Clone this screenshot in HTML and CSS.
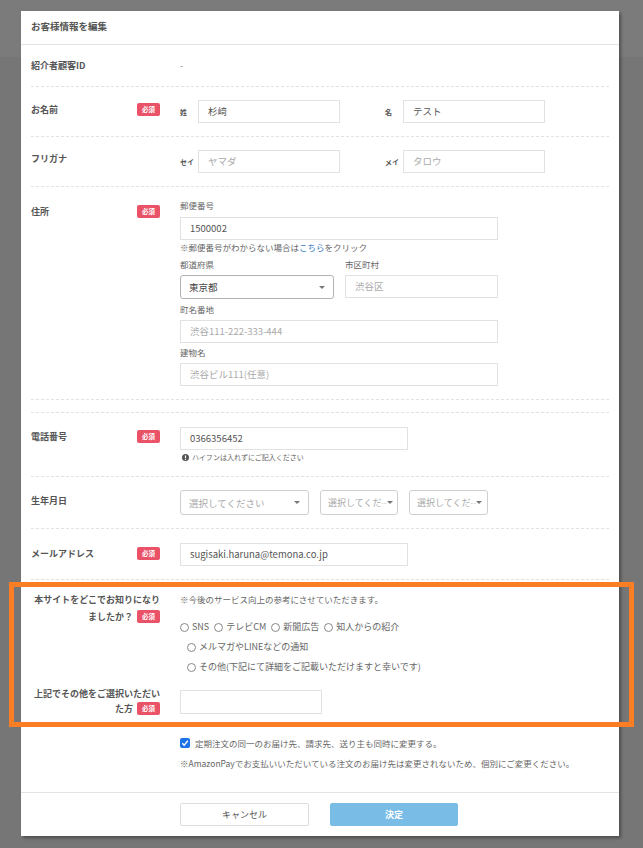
FILE: index.html
```html
<!DOCTYPE html>
<html lang="ja">
<head>
<meta charset="utf-8">
<title>お客様情報を編集</title>
<link rel="stylesheet" href="styles.css">
</head>
<body>
<div class="page">
  <div class="topband"></div>
  <div class="page-body"><span class="leave">退会する</span></div>
</div>

<div class="modal">
  <div class="modal-header">お客様情報を編集</div>

  <div class="row row-id">
    <div class="label"><span>紹介者顧客ID</span></div>
    <div class="content plain">-</div>
  </div>

  <div class="row row-name">
    <div class="label"><span>お名前</span><span class="badge">必須</span></div>
    <div class="content pair">
      <div class="pair-item"><span class="sub">姓</span><div class="input w142">杉﨑</div></div>
      <div class="pair-item"><span class="sub">名</span><div class="input w142">テスト</div></div>
    </div>
  </div>

  <div class="row row-kana">
    <div class="label"><span>フリガナ</span></div>
    <div class="content pair">
      <div class="pair-item"><span class="sub">セイ</span><div class="input w142 ph">ヤマダ</div></div>
      <div class="pair-item"><span class="sub">メイ</span><div class="input w142 ph">タロウ</div></div>
    </div>
  </div>

  <div class="row row-addr">
    <div class="label addr-label"><span>住所</span><span class="badge">必須</span></div>
    <div class="content stack">
      <div class="cap">郵便番号</div>
      <div class="input w318 mt6">1500002</div>
      <div class="note mt1">※郵便番号がわからない場合は<span class="link">こちら</span>をクリック</div>
      <div class="two-col mt5">
        <div class="cap">都道府県</div>
        <div class="cap">市区町村</div>
      </div>
      <div class="two-col mt5">
        <div class="select pref"><span>東京都</span><span class="caret"></span></div>
        <div class="input w153 ph">渋谷区</div>
      </div>
      <div class="cap mt4">町名番地</div>
      <div class="input w318 ph mt5">渋谷111-222-333-444</div>
      <div class="cap mt3">建物名</div>
      <div class="input w318 ph mt5">渋谷ビル111(任意)</div>
    </div>
  </div>

  <div class="row row-empty"></div>

  <div class="row row-tel">
    <div class="label"><span>電話番号</span><span class="badge">必須</span></div>
    <div class="content stack">
      <div class="input w228">0366356452</div>
      <div class="hint"><svg class="info" viewBox="0 0 10 10" width="7" height="7"><circle cx="5" cy="5" r="5" fill="#555"/><rect x="4.2" y="2" width="1.6" height="4" fill="#fff"/><rect x="4.2" y="7" width="1.6" height="1.5" fill="#fff"/></svg>ハイフンは入れずにご記入ください</div>
    </div>
  </div>

  <div class="row row-birth">
    <div class="label birth-label"><span>生年月日</span></div>
    <div class="content selects">
      <div class="select date w129"><span class="ph-t">選択してください</span><span class="caret"></span></div>
      <div class="select date w78 tight"><span class="ph-t small">選択してくだ<span class="dots">…</span></span><span class="caret"></span></div>
      <div class="select date w79 tight"><span class="ph-t small">選択してくだ<span class="dots">…</span></span><span class="caret"></span></div>
    </div>
  </div>

  <div class="row row-mail">
    <div class="label mail-label"><span>メールアドレス</span><span class="badge">必須</span></div>
    <div class="content">
      <div class="input w228">sugisaki.haruna@temona.co.jp</div>
    </div>
  </div>

  <div class="row row-survey">
    <div class="survey-block">
      <div class="label right"><span>本サイトをどこでお知りになり<br>ましたか？<span class="badge inline">必須</span></span></div>
      <div class="content stack">
        <div class="note">※今後のサービス向上の参考にさせていただきます。</div>
        <div class="radios first">
          <span class="radio"><i></i>SNS</span>
          <span class="radio"><i></i>テレビCM</span>
          <span class="radio"><i></i>新聞広告</span>
          <span class="radio"><i></i>知人からの紹介</span>
        </div>
        <div class="radios indent">
          <span class="radio"><i></i>メルマガやLINEなどの通知</span>
        </div>
        <div class="radios indent">
          <span class="radio"><i></i>その他(下記にて詳細をご記載いただけますと幸いです)</span>
        </div>
      </div>
    </div>
    <div class="survey-block second">
      <div class="label right other-label"><span>上記でその他をご選択いただい<br>た方<span class="badge inline">必須</span></span></div>
      <div class="content">
        <div class="input w142 tall"></div>
      </div>
    </div>
  </div>

  <div class="sync">
    <div class="check-line"><span class="checkbox"><svg viewBox="0 0 10 10" width="10" height="10"><path d="M2.3 5.2 L4.2 7.2 L7.8 2.8" fill="none" stroke="#fff" stroke-width="1.4"/></svg></span>定期注文の同一のお届け先、請求先、送り主も同時に変更する。</div>
    <div class="note sync-note">※AmazonPayでお支払いいただいている注文のお届け先は変更されないため、個別にご変更ください。</div>
  </div>

  <div class="modal-footer">
    <button class="btn cancel">キャンセル</button>
    <button class="btn ok">決定</button>
  </div>
</div>

<div class="highlight"></div>
</body>
</html>
```

FILE: styles.css
```css
* { box-sizing: border-box; }
html, body {
  margin: 0;
  padding: 0;
  height: 848px;
  overflow: hidden;
}
body {
  font-family: "Noto Sans CJK JP", "Noto Sans", sans-serif;
  background: #777;
  color: #555;
  position: relative;
}

.page { height: 848px; }
.topband { height: 57px; background: #7b7b7b; }
.page-body { background: #767676; height: 791px; padding: 784px 0 0 85px; }
.leave { font-size: 9px; color: #28315a; line-height: 12px; }

.modal {
  position: absolute;
  left: 21px;
  top: 11px;
  width: 598px;
  background: #fff;
  box-shadow: 2px 2px 3px rgba(0,0,0,0.35);
}

.modal-header {
  height: 34px;
  padding-left: 10px;
  line-height: 31px;
  font-size: 9.5px;
  font-weight: bold;
  color: #555;
  border-bottom: 1px solid #e3e3e3;
}

.row {
  display: grid;
  grid-template-columns: 129px 1fr;
  column-gap: 20px;
  margin: 0 10px;
  border-bottom: 1px dashed #e2e2e2;
  align-items: start;
}

.label {
  display: flex;
  justify-content: space-between;
  align-items: center;
  font-size: 9px;
  font-weight: bold;
  color: #555;
  line-height: 13px;
  margin-top: 3px;
}
.label.right { justify-content: flex-end; text-align: right; line-height: 17px; margin-top: 0; }

.badge {
  display: inline-block;
  width: 23px;
  height: 13px;
  line-height: 13px;
  background: #ea5268;
  color: #fff;
  font-size: 6.5px;
  text-align: center;
  border-radius: 2px;
  font-weight: bold;
}
.badge.inline { margin-left: 4px; vertical-align: middle; position: relative; top: -1px; }

.content { font-size: 8.5px; color: #666; }
.plain { line-height: 12px; font-size: 9px; color: #888; }

.row-id { padding: 15px 0 14px; }
.row-id .label { margin-top: 0; line-height: 12px; }

.row-name { padding: 13px 0 13px; }
.row-kana { padding: 13px 0 13px; }
.row-kana .label { margin-top: 2px; }

.pair { display: flex; gap: 45px; }
.pair-item { display: flex; align-items: center; }
.sub { width: 18px; font-size: 7px; font-weight: bold; color: #555; }

.input {
  height: 23px;
  border: 1px solid #e2e2e2;
  font-size: 9.5px;
  line-height: 21px;
  padding-left: 9px;
  color: #555;
  background: #fff;
  white-space: nowrap;
}
.input.ph { color: #aaa; }
.input.tall { height: 24px; }
.w142 { width: 142px; }
.w318 { width: 318px; }
.w153 { width: 153px; }
.w228 { width: 228px; }
.w129 { width: 129px; }
.w78 { width: 78px; }
.w79 { width: 79px; }

.stack { display: flex; flex-direction: column; align-items: flex-start; }
.cap { font-size: 8.5px; line-height: 12px; color: #666; }
.note { font-size: 8.5px; line-height: 12px; color: #666; }
.link { color: #3a7cc4; }
.mt1 { margin-top: 1px; }
.mt3 { margin-top: 3px; }
.mt4 { margin-top: 4px; }
.mt5 { margin-top: 5px; }
.mt6 { margin-top: 6px; }

.two-col { display: flex; gap: 11px; }
.two-col .cap { width: 154px; }

.row-addr { padding: 12px 0 13px; }
.addr-label { margin-top: 6px; }

.select {
  display: flex;
  align-items: center;
  justify-content: space-between;
  border: 1px solid #b3b3b3;
  border-radius: 3px;
  background: #fff;
  font-size: 9.5px;
  color: #444;
  padding: 0 8px;
  white-space: nowrap;
  overflow: hidden;
}
.select.pref { width: 154px; height: 24px; }
.caret {
  width: 0; height: 0;
  border-left: 3px solid transparent;
  border-right: 3px solid transparent;
  border-top: 3px solid #777;
  flex: none;
}
.select.date { height: 25px; border-color: #cfcfcf; }
.select.tight { padding: 0 3px 0 7px; justify-content: flex-start; }
.ph-t { color: #aaa; }
.ph-t.small { font-size: 9px; }
.dots { font-size: 5.5px; }

.row-empty { height: 13px; }

.row-tel { padding: 14px 0 13px; }
.hint { font-size: 7px; color: #666; line-height: 12px; display: flex; align-items: center; gap: 3px; margin-top: 1px; padding-left: 2px; }
.info { flex: none; }

.selects { display: flex; gap: 11px; }
.row-birth { padding: 13px 0 13px; }
.birth-label { margin-top: 4px; }

.row-mail { padding: 14px 0 13px; }
.mail-label { margin-top: 4px; }

.row-survey { display: block; padding: 13px 0 7px; }
.survey-block { display: grid; grid-template-columns: 129px 1fr; column-gap: 20px; align-items: start; }
.survey-block .label { margin-top: -2px; }
.survey-block.second { margin-top: 17px; }
.survey-block .other-label { margin-top: -4px; line-height: 15px; }

.radios { display: flex; gap: 5px; font-size: 9px; color: #666; line-height: 12px; margin-top: 8px; }
.radios.first { margin-top: 16px; }
.radios.indent { padding-left: 7px; }
.radio { display: inline-flex; align-items: center; gap: 3px; }
.radio i { display: inline-block; width: 9px; height: 9px; border: 1px solid #888; border-radius: 50%; }

.sync { padding: 13px 0 23px 159px; }
.check-line { display: flex; align-items: center; gap: 5px; font-size: 8.5px; color: #666; line-height: 12px; }
.checkbox { width: 10px; height: 10px; background: #1b73e8; border-radius: 2px; display: inline-flex; }
.sync-note { margin-top: 8px; }

.modal-footer {
  border-top: 1px solid #e3e3e3;
  padding: 10px 0 10px 159px;
  display: flex;
  gap: 21px;
}
.btn {
  height: 23px;
  width: 129px;
  font-family: inherit;
  font-size: 9px;
  border-radius: 2px;
  padding: 0;
}
.btn.cancel { background: #fff; border: 1px solid #ddd; color: #555; }
.btn.ok { background: #79bde6; border: 1px solid #79bde6; color: #fff; font-weight: bold; width: 128px; }

.highlight {
  position: absolute;
  left: 9px;
  top: 582px;
  width: 625px;
  height: 145px;
  border: 5px solid #fb7e24;
  pointer-events: none;
}
```
